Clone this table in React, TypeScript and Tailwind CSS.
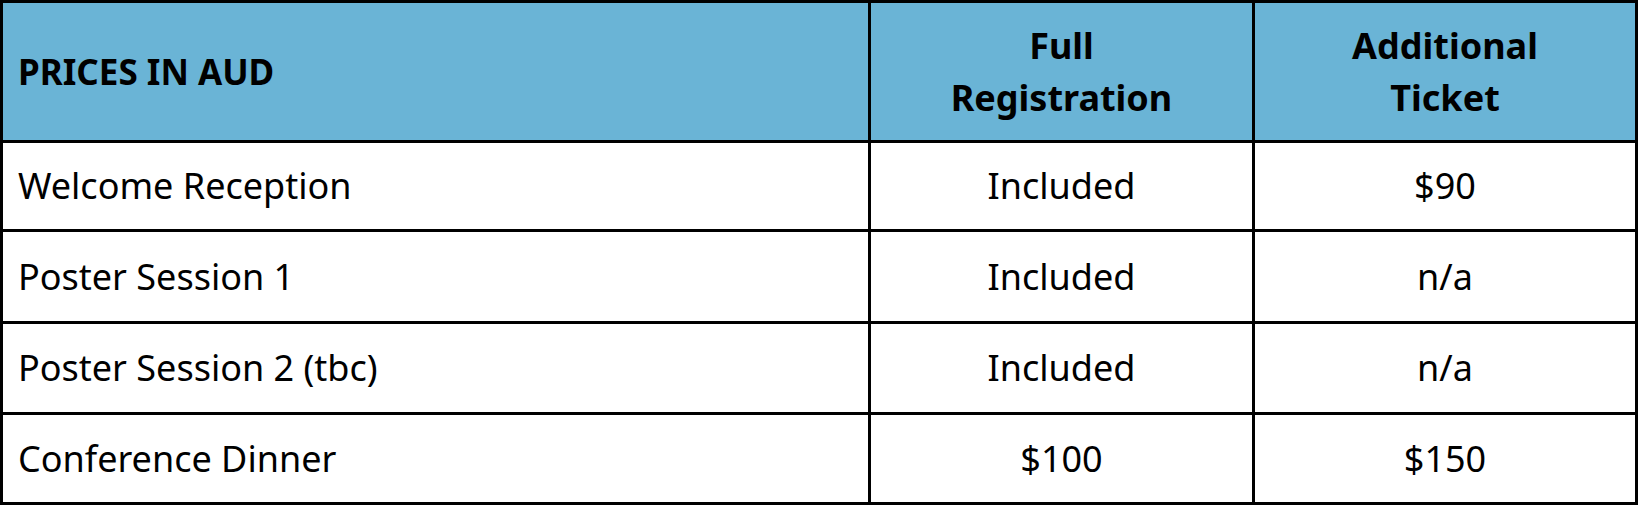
import React from "react";

const rows: [string, string, string][] = [
  ["Welcome Reception", "Included", "$90"],
  ["Poster Session 1", "Included", "n/a"],
  ["Poster Session 2 (tbc)", "Included", "n/a"],
  ["Conference Dinner", "$100", "$150"],
];

export default function App() {
  return (
    <div className="w-[1641px] h-[510px] bg-white" style={{ fontFamily: '"Noto Sans", "Open Sans", sans-serif' }}>
      <div className="w-[1638px] bg-black p-[3px] grid grid-cols-[865px_381px_380px] grid-rows-[137px_86px_89px_88px_87px] gap-[3px] text-[36px] text-black">
        <div className="bg-[#6ab4d6] flex items-center pl-[15px] font-bold text-[35px] leading-[52px]">PRICES IN AUD</div>
        <div className="bg-[#6ab4d6] flex items-center justify-center text-center font-bold leading-[52px]">
          Full
          <br />
          Registration
        </div>
        <div className="bg-[#6ab4d6] flex items-center justify-center text-center font-bold leading-[52px]">
          Additional
          <br />
          Ticket
        </div>
        {rows.map(([a, b, c]) => (
          <React.Fragment key={a}>
            <div className="bg-white flex items-center pl-[15px] leading-none">{a}</div>
            <div className="bg-white flex items-center justify-center leading-none">{b}</div>
            <div className="bg-white flex items-center justify-center leading-none">{c}</div>
          </React.Fragment>
        ))}
      </div>
    </div>
  );
}
